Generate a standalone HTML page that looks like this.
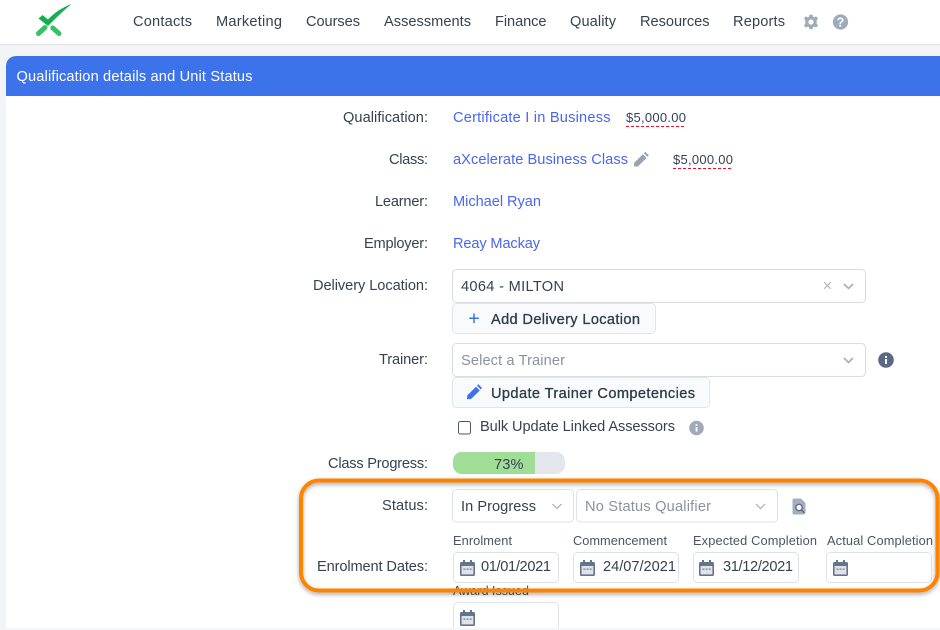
<!DOCTYPE html>
<html lang="en">
<head>
<meta charset="utf-8">
<title>Qualification details and Unit Status</title>
<style>
html,body{margin:0;padding:0;width:940px;height:630px;overflow:hidden;background:#f3f4f6}
svg{display:block}
text{font-family:"Liberation Sans",Arial,sans-serif;font-size:14.6px;fill:#374151}
.lnk{fill:#4a66f0}
.lab{text-anchor:end}
.ph{fill:#8a92a0}
.btn{fill:#2f3a4a;font-size:14.6px;stroke:#2f3a4a;stroke-width:.3}
.sm{font-size:12.8px;fill:#4b5563}
.box{fill:#fff;stroke:#dfe2e7;stroke-width:1}
.chev{fill:none;stroke:#a8adb6;stroke-width:1.6}
</style>
</head>
<body>
<svg width="940" height="630" viewBox="0 0 940 630" xmlns="http://www.w3.org/2000/svg">
<defs>
  <filter id="os" x="-5%" y="-15%" width="110%" height="130%"><feDropShadow dx="0" dy="2" stdDeviation="2" flood-color="#000" flood-opacity=".35"/></filter>
  <g id="cal"><path d="M0 3.5a1.5 1.5 0 0 1 1.5-1.5H13.5a1.5 1.5 0 0 1 1.5 1.5V14.500a1.500 1.500 0 0 1-1.500 1.500H1.500A1.500 1.500 0 0 1 0 14.500Z" fill="#64748b"/><rect x="3" y="0" width="2" height="3.500" fill="#64748b"/><rect x="10" y="0" width="2" height="3.500" fill="#64748b"/><rect x="1.600" y="6" width="11.800" height="8.400" fill="#dfe3e9"/><rect x="3.400" y="8.400" width="2" height="1.600" fill="#8c98a9"/><rect x="6.500" y="8.400" width="2" height="1.600" fill="#8c98a9"/><rect x="9.600" y="8.400" width="2" height="1.600" fill="#8c98a9"/></g>
</defs>

<!-- page and nav -->
<rect width="940" height="630" fill="#f3f4f6"/>
<rect width="940" height="44" fill="#fff"/>
<rect y="44" width="940" height="1" fill="#e0e2e6"/>

<!-- logo -->
<path d="M38.500 33.500L45 27.500M52.800 28L59 33.500" stroke="#3cc067" stroke-width="5" stroke-linecap="round" fill="none"/>
<path d="M38.500 18.500L42.500 15 48 19.500C54 13 62 7.500 71.500 4 63 11 56 18 48 26Z" fill="#12b04c"/>

<text x="133" y="26" textLength="59">Contacts</text>
<text x="216" y="26" textLength="66">Marketing</text>
<text x="306" y="26" textLength="54">Courses</text>
<text x="384" y="26" textLength="87">Assessments</text>
<text x="495" y="26" textLength="51.500">Finance</text>
<text x="570" y="26" textLength="46">Quality</text>
<text x="640" y="26" textLength="69.500">Resources</text>
<text x="733" y="26" textLength="52">Reports</text>

<!-- gear -->
<g transform="translate(811 22)" fill="#a0aab9">
  <path fill-rule="evenodd" d="M-1.600-7.300H1.600L2-5.200 3.300-4.600 5.100-5.800 7.100-3.400 5.700-1.900V1.900L7.100 3.400 5.100 5.800 3.300 4.600 2 5.200 1.600 7.300H-1.600L-2 5.200-3.300 4.600-5.100 5.800-7.100 3.400-5.700 1.900V-1.900L-7.100-3.400-5.100-5.800-3.300-4.600-2-5.200ZM0-2.600A2.600 2.600 0 1 0 0 2.600 2.600 2.600 0 1 0 0-2.600Z"/>
</g>
<!-- help -->
<circle cx="840.500" cy="22" r="7.600" fill="#a0aab9"/>
<text x="840.500" y="26.600" text-anchor="middle" style="font-size:12.500px;font-weight:700;fill:#fff">?</text>

<!-- card -->
<path d="M6 66a10 10 0 0 1 10-10H940V628H6Z" fill="#fff"/>
<path d="M6 96V66a10 10 0 0 1 10-10H940V96Z" fill="#3d73ea"/>
<text x="16.500" y="81" textLength="236" style="fill:#fff;font-size:14.600px">Qualification details and Unit Status</text>

<!-- labels -->
<text class="lab" x="428" y="122" textLength="85">Qualification:</text>
<text class="lab" x="428" y="164" textLength="39">Class:</text>
<text class="lab" x="428" y="206" textLength="53">Learner:</text>
<text class="lab" x="428" y="248" textLength="64">Employer:</text>
<text class="lab" x="428" y="290" textLength="115">Delivery Location:</text>
<text class="lab" x="428" y="364" textLength="49">Trainer:</text>
<text class="lab" x="428" y="468" textLength="100">Class Progress:</text>
<text class="lab" x="428" y="510" textLength="46">Status:</text>
<text class="lab" x="428" y="571" textLength="111">Enrolment Dates:</text>

<!-- values -->
<text class="lnk" x="453" y="122" textLength="157.500">Certificate I in Business</text>
<text x="626" y="122" textLength="60" style="font-size:13px">$5,000.00</text>
<line x1="626" y1="126.500" x2="686" y2="126.500" stroke="#e8102e" stroke-width="1" stroke-dasharray="3 2"/>
<text class="lnk" x="453" y="164" textLength="175">aXcelerate Business Class</text>
<path d="M634 166.500L634.200 162.800 642.800 154.200 646.500 157.900 637.900 166.500ZM643.800 153.200L645.200 151.800 648.900 155.500 647.500 156.900Z" fill="#98a2b3"/>
<text x="673" y="164" textLength="60" style="font-size:13px">$5,000.00</text>
<line x1="673" y1="168.500" x2="733" y2="168.500" stroke="#e8102e" stroke-width="1" stroke-dasharray="3 2"/>
<text class="lnk" x="453" y="206" textLength="88">Michael Ryan</text>
<text class="lnk" x="453" y="248" textLength="87">Reay Mackay</text>

<!-- delivery location -->
<rect class="box" x="452.500" y="269.500" width="413" height="33" rx="4" style="stroke:#d8dbe1"/>
<text x="461" y="291" textLength="103">4064 - MILTON</text>
<path d="M824.200 282.200L830.800 288.800M830.800 282.200L824.200 288.800" stroke="#b5b9c1" stroke-width="1.200" fill="none"/>
<path class="chev" d="M844 284L848.500 288.500 853 284"/>
<rect x="452.500" y="303.500" width="203" height="30" rx="4" fill="#f9fafb" stroke="#e1e4e9"/>
<path d="M474 313.500V323M469.200 318.200H478.800" stroke="#3d73ea" stroke-width="1.500" fill="none"/>
<text class="btn" x="491" y="324" textLength="149">Add Delivery Location</text>

<!-- trainer -->
<rect class="box" x="452.500" y="343.500" width="413" height="33" rx="4" style="stroke:#d8dbe1"/>
<text class="ph" x="461" y="365" textLength="104">Select a Trainer</text>
<path class="chev" d="M844 358L848.500 362.500 853 358"/>
<circle cx="886" cy="360" r="7.800" fill="#5a6a85"/>
<rect x="885" y="359" width="2" height="5" fill="#fff"/>
<rect x="885" y="356" width="2" height="2" fill="#fff"/>
<rect x="452.500" y="377.500" width="257" height="30" rx="4" fill="#f9fafb" stroke="#e1e4e9"/>
<path d="M467 399.300L467.300 395.400 476 386.700 479.800 390.500 471 399ZM477 385.700L478.400 384.300 482 388 480.800 389.500Z" fill="#3d73ea"/>
<text class="btn" x="491" y="398" textLength="204">Update Trainer Competencies</text>

<!-- checkbox -->
<rect x="458.500" y="421.500" width="12" height="12.500" rx="2" fill="#fff" stroke="#4b5563" stroke-width="1"/>
<text x="480" y="431" textLength="195">Bulk Update Linked Assessors</text>
<circle cx="696.500" cy="428" r="7.300" fill="#a0aab9"/>
<rect x="695.600" y="427" width="1.800" height="4.600" fill="#fff"/>
<rect x="695.600" y="424.200" width="1.800" height="1.800" fill="#fff"/>

<!-- progress -->
<rect x="453" y="452" width="112" height="22" rx="9" fill="#e3e6ec"/>
<path d="M462 452H535V474H462A9 9 0 0 1 453 465V461A9 9 0 0 1 462 452Z" fill="#a0dd97"/>
<text x="494" y="469" textLength="29.500">73%</text>

<!-- status -->
<rect class="box" x="452.500" y="489.500" width="121" height="32.500" rx="4"/>
<text x="461" y="511" textLength="75">In Progress</text>
<path class="chev" d="M552.500 504L557 508.500 561.500 504" style="stroke-width:1.200"/>
<rect class="box" x="576.500" y="489.500" width="201" height="32.500" rx="4"/>
<text class="ph" x="585" y="511" textLength="126">No Status Qualifier</text>
<path class="chev" d="M756 504L760.500 508.500 765 504" style="stroke-width:1.200"/>
<!-- file search -->
<path d="M792.500 500a1.500 1.500 0 0 1 1.500-1.500H801L805.500 503V512.500L804 514.500H794a1.500 1.500 0 0 1-1.500-1.500Z" fill="#a3aebf"/>
<circle cx="799" cy="507.500" r="3.200" fill="#fff" stroke="#5f6f87" stroke-width="1.400"/>
<path d="M801.200 509.700L804.500 513" stroke="#5f6f87" stroke-width="1.500"/>

<!-- dates -->
<text class="sm" x="453" y="545" textLength="59">Enrolment</text>
<text class="sm" x="573" y="545" textLength="94">Commencement</text>
<text class="sm" x="693" y="545" textLength="124">Expected Completion</text>
<text class="sm" x="827" y="545" textLength="106">Actual Completion</text>
<rect class="box" x="453.500" y="552.500" width="105" height="30" rx="4"/>
<rect class="box" x="573.500" y="552.500" width="105" height="30" rx="4"/>
<rect class="box" x="693.500" y="552.500" width="105" height="30" rx="4"/>
<rect class="box" x="826.500" y="552.500" width="105" height="30" rx="4"/>
<use href="#cal" x="460" y="560"/>
<use href="#cal" x="580" y="560"/>
<use href="#cal" x="699" y="560"/>
<use href="#cal" x="833" y="560"/>
<text x="481" y="571" textLength="70">01/01/2021</text>
<text x="603" y="571" textLength="73">24/07/2021</text>
<text x="723" y="571" textLength="70">31/12/2021</text>

<!-- award issued -->
<text class="sm" x="453" y="595" textLength="76">Award Issued</text>
<rect class="box" x="453.500" y="602.500" width="105" height="40" rx="4"/>
<use href="#cal" x="460" y="610"/>
<rect x="6" y="628" width="934" height="2" fill="#f5f6f7"/>

<!-- orange highlight -->
<rect x="301" y="480.500" width="636.500" height="110" rx="18" fill="none" stroke="#ff8200" stroke-width="4" filter="url(#os)"/>
</svg>
</body>
</html>
